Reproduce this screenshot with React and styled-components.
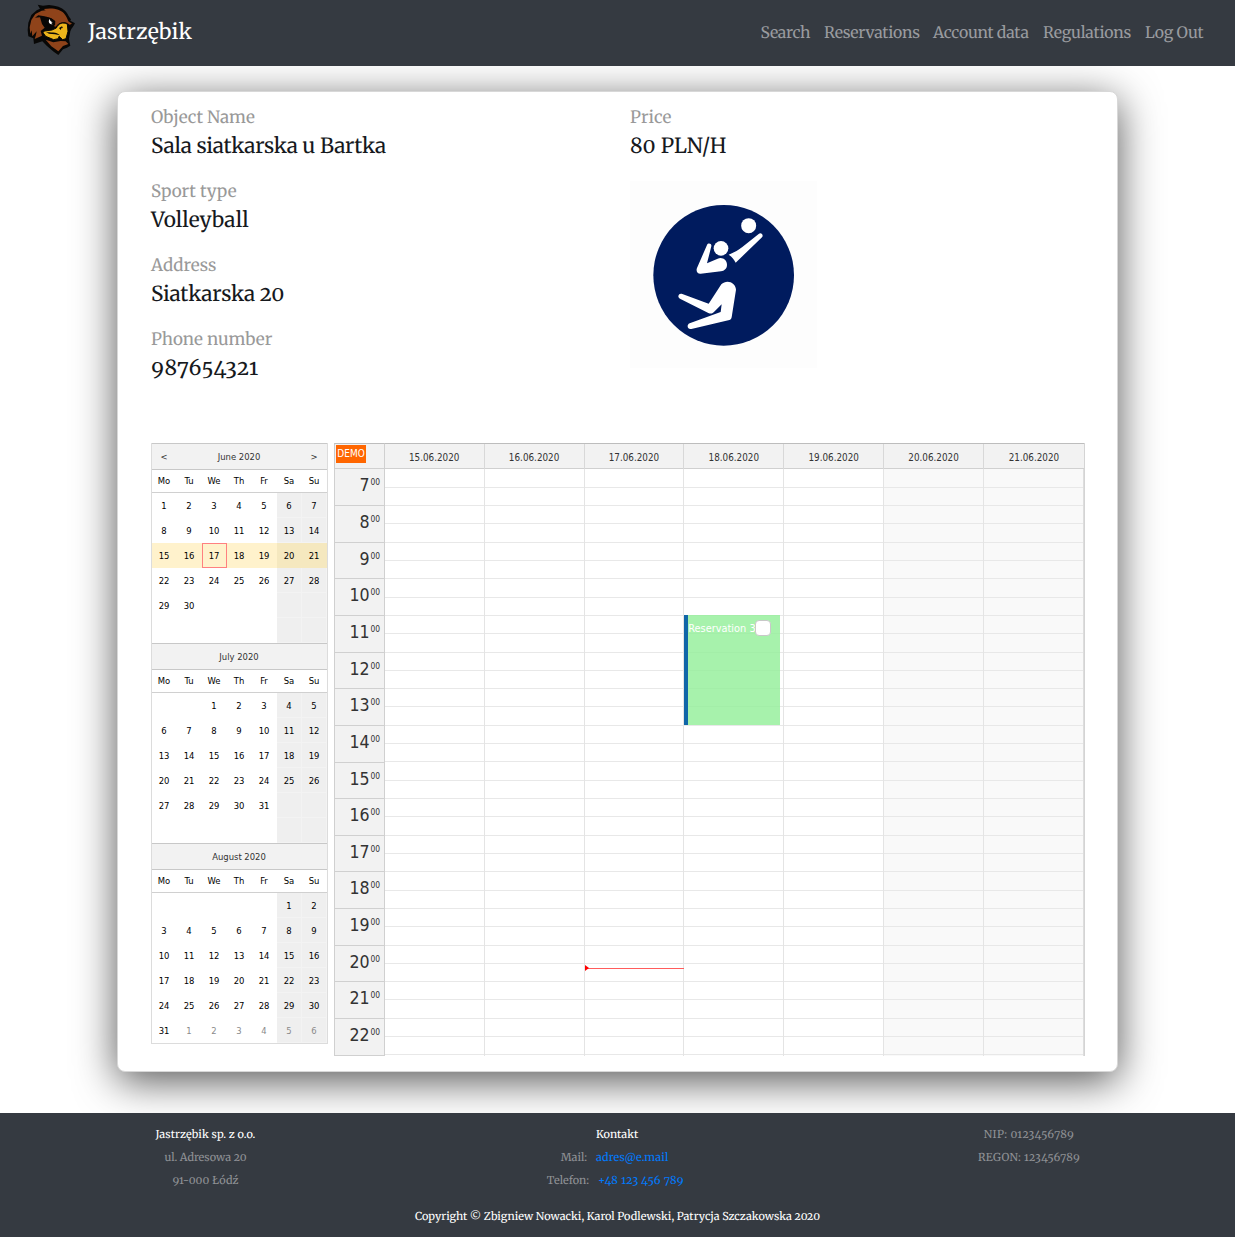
import React from "react";
import styled, { createGlobalStyle } from "styled-components";

const serif = `"Merriweather", "DejaVu Serif Condensed", "DejaVu Serif", serif`;
const sans = `"DejaVu Sans Condensed", "DejaVu Sans", sans-serif`;

const GlobalStyle = createGlobalStyle`
  *, *::before, *::after { box-sizing: border-box; }
  body {
    margin: 0;
    background: #fff;
    color: #16191d;
    font-family: ${serif};
    font-variant-numeric: oldstyle-nums;
    font-variation-settings: "opsz" 18;
    text-rendering: geometricPrecision;
  }
`;

const Page = styled.div`
  display: flex;
  flex-direction: column;
  height: 1237px;
  overflow: hidden;
`;

const Navbar = styled.header`
  position: relative;
  z-index: 1;
  flex: none;
  display: flex;
  align-items: center;
  justify-content: space-between;
  height: 66px;
  padding: 0 32px 0 27px;
  background: #353a41;
`;

const Brand = styled.div`
  display: flex;
  align-items: center;
  gap: 12px;
  height: 60px;
  align-self: flex-start;
  color: #fff;
  font-size: 21.2px;
`;

const BrandName = styled.span`
  padding-top: 2px;
  letter-spacing: 0.2px;
`;

const Nav = styled.nav`
  display: flex;
  gap: 13.5px;
`;

const NavLink = styled.a`
  width: ${(p) => p.$w}px;
  white-space: nowrap;
  font-size: 15.8px;
  line-height: 24px;
  letter-spacing: -0.25px;
  color: #999b9f;
`;

const Main = styled.main`
  flex: none;
  height: 1047px;
  padding: 25px 117px 0;
`;

const Card = styled.section`
  height: 981px;
  padding: 13px 32px 0 33px;
  border: 1px solid #d8d8d8;
  border-radius: 8px;
  background: #fff;
  box-shadow: 0 9px 42px rgba(0, 0, 0, 0.67);
`;

const Details = styled.div`
  display: grid;
  grid-template-columns: 479px 1fr;
  height: 338px;
`;

const Field = styled.div`
  height: 74px;
`;

const Label = styled.div`
  font-size: 17px;
  line-height: 25px;
  color: #999;
`;

const Value = styled.div`
  font-size: 20.8px;
  line-height: 32px;
  white-space: nowrap;
  letter-spacing: ${(p) => p.$tracking || 0}px;
`;

const SportPicture = styled.div`
  width: 187px;
  height: 187px;
  margin-top: 2px;
  background: #fdfdfd;
  svg { display: block; }
`;

const Planner = styled.div`
  display: flex;
  align-items: flex-start;
  gap: 6.5px;
  margin-left: -0.5px;
  font-family: ${sans};
  font-variant-numeric: normal;
  text-rendering: auto;
`;

const Navigator = styled.div`
  width: 177px;
  border: solid #dcdcdc;
  border-width: 0 1px 1px;
  font-size: 9.4px;
  color: #000;
`;

const MonthTitle = styled.div`
  display: grid;
  grid-template-columns: 25px 1fr 25px;
  height: 27px;
  border: solid #c8c8c8;
  border-width: 1px 0;
  background: #f2f2f2;
  color: #333;
  line-height: 26px;
  text-align: center;
`;

const Weekdays = styled.div`
  display: grid;
  grid-template-columns: repeat(7, 25px);
  height: 23px;
  border-bottom: 1px solid #d0d0d0;
  line-height: 22px;
  text-align: center;
`;

const Days = styled.div`
  display: grid;
  grid-template-columns: repeat(7, 25px);
  grid-auto-rows: 25px;
`;

const Day = styled.span`
  line-height: ${(p) => (p.$today ? 23 : 25)}px;
  text-align: center;
  color: ${(p) => (p.$muted ? "#8a8a8a" : "#000")};
  background: ${(p) => (p.$week ? (p.$weekend ? "#f5e8bf" : "#fff2cc") : p.$weekend ? "#efefef" : "#fff")};
  border: ${(p) => (p.$today ? "1px solid #ff8080" : "0 solid")};
  box-shadow: ${(p) => (p.$weekend && !p.$week ? "inset -1px -1px 0 #f3f3f3" : "none")};
`;

const Scheduler = styled.div`
  position: relative;
  display: grid;
  grid-template-columns: 50.8px 1fr;
  grid-template-rows: 26.4px 586.2px;
  width: 750.9px;
  border-right: 1px solid #d4d4d4;
`;

const Demo = styled.span`
  position: absolute;
  left: 2px;
  top: 2px;
  width: 30px;
  height: 17.5px;
  background: #ff6600;
  color: #fff;
  font-size: 10px;
  line-height: 18px;
  text-align: center;
`;

const Corner = styled.div`
  background: #f2f2f2;
  border: 1px solid #ccc;
  border-color: #bdbdbd #d0d0d0 #d0d0d0 #ccc;
`;

const Dates = styled.div`
  display: grid;
  grid-template-columns: repeat(7, 1fr);
  border: solid #bdbdbd;
  border-width: 1px 0;
  border-bottom-color: #d0d0d0;
  background: #f2f2f2;
`;

const DateCell = styled.div`
  border-right: 1px solid #d8d8d8;
  color: #333;
  font-size: 9.8px;
  line-height: 27px;
  text-align: center;
  &:last-child { border-right: 0; }
`;

const Hours = styled.div`
  display: flex;
  flex-direction: column;
`;

const Hour = styled.div`
  flex: 1;
  display: flex;
  justify-content: flex-end;
  gap: 0.8px;
  padding: 5px 3.8px 0 0;
  border: solid #d0d0d0;
  border-width: 0 1px 1px;
  background: #f2f2f2;
  color: #333;
  font-size: 17.6px;
  line-height: 23px;
`;

const Minutes = styled.span`
  font-size: 8.4px;
  line-height: 17px;
`;

const Columns = styled.div`
  display: grid;
  grid-template-columns: repeat(7, 1fr);
`;

const DayColumn = styled.div`
  position: relative;
  display: flex;
  flex-direction: column;
  border-right: 1px solid #e4e4e4;
  background: ${(p) => (p.$weekend ? "#f9f9f9" : "#fff")};
  &:last-child { border-right-color: #ddd; }
`;

const Slot = styled.div`
  flex: 1;
  border-bottom: 1px solid #e8e8e8;
`;

const Booking = styled.div`
  position: absolute;
  left: -0.2px;
  top: 145.7px;
  width: 96px;
  height: 110px;
  display: flex;
  align-items: flex-start;
  padding-top: 5px;
  border-left: 4px solid #1066a8;
  background: rgba(148, 239, 154, 0.82);
  color: #fff;
  font-size: 10.9px;
  line-height: 17px;
  white-space: nowrap;
`;

const BookingName = styled.span`
  width: 67px;
`;

const Check = styled.span`
  width: 16px;
  height: 16px;
  border: 1px solid #c8c8c8;
  border-radius: 4px;
  background: #fff;
`;

const NowLine = styled.div`
  position: absolute;
  left: 0;
  top: 498.7px;
  width: 99.4px;
  height: 1px;
  background: #ff5c5c;
  &::before {
    content: "";
    position: absolute;
    left: 0;
    top: -3px;
    border: solid transparent;
    border-width: 3.5px 0 3.5px 4px;
    border-left-color: #f00;
  }
`;

const Footer = styled.footer`
  position: relative;
  z-index: 1;
  flex: 1;
  background: #353a41;
  color: #8f9195;
  font-size: 10.9px;
  line-height: 23px;
`;

const FooterColumns = styled.div`
  display: grid;
  grid-template-columns: 411px 412px 412px;
  height: 79px;
  padding-top: 10px;
`;

const FooterColumn = styled.div`
  text-align: center;
`;

const Contact = styled.div`
  display: grid;
  grid-template-columns: ${(p) => p.$labelWidth || 176}px 1fr;
  column-gap: 9px;
  text-align: left;
`;

const ContactLabel = styled.span`
  text-align: right;
`;

const Line = styled.div`
  color: ${(p) => (p.$strong ? "#fff" : "inherit")};
  letter-spacing: ${(p) => p.$tracking || 0}px;
`;

const Link = styled.a`
  color: #007bff;
  letter-spacing: ${(p) => p.$tracking || 0}px;
`;

const Copyright = styled.div`
  padding-top: 13px;
  text-align: center;
  color: #fff;
`;

const HawkLogo = () => (
  <svg width="49" height="52" viewBox="80 12 147 156" aria-hidden="true">
    <path d="M112 14 L128 17 L146 15 C168 17 184 22 194 32 C204 43 206 52 212 57 L210 62 L224 70 C221 78 214 83 210 94 L206 116 L207 124 L210 137 L200 143 L188 148 L174 165 L160 155 L139 137 L126 124 L101 132 L99 115 L84 109 L82 91 L84 68 L93 45 L109 31 L119 26 Z" fill="#080706" />
    <path d="M130 27 C157 22 180 28 190 39 C199 49 202 58 204 64 L215 71 L208 74 L199 68 C186 65 174 68 166 80 L160 78 L163 62 C154 55 144 50 128 48 L114 46 L104 53 L119 52 L125 72 L133 83 L121 93 L125 107 L103 117 L106 108 L109 94 L96 109 L94 91 L90 101 L88 82 L93 60 L105 42 L124 32 L136 31 Z" fill="#8f431a" />
    <path d="M136 119 L159 127 L181 123 L196 124 L204 132 L188 138 L174 154 L153 139 Z" fill="#8f431a" />
    <path d="M201 72 C188 66 175 69 168 84 L155 90 L132 93 L128 98 L136 109 L160 119 L174 116 L176 109 L187 119 L197 116 L203 94 Z" fill="#edb51b" stroke="#080706" strokeWidth="3" />
    <path d="M136 95 C149 99 169 94 179 106 L164 103 L146 101 Z" fill="#080706" />
    <path d="M176 84 L185 79 L188 85 L184 83 L181 90 Z" fill="#080706" />
    <path d="M130 50 L152 54 L165 64 L164 76 L154 80 L142 76 L134 66 Z" fill="#080706" />
    <path d="M148 57 C142 66 147 73 157 73 C151 69 153 67 158 67 C150 65 150 62 148 57Z" fill="#fff" />
  </svg>
);

const VolleyballSign = () => (
  <svg width="187" height="187" viewBox="31 272 561 561" aria-hidden="true">
    <circle cx="312" cy="555" r="211" fill="#001b5e" />
    <g fill="#fff">
      <circle cx="387" cy="406" r="22.5" />
      <circle cx="304" cy="474" r="22" />
      <path d="M417 431 C424 425 433 434 427 441 L348 517 C343 507 338 500 327 493 C346 486 357 478 368 470 Z" />
      <path d="M262 464 C265 456 277 459 275 468 L262 519 L294 505 C308 499 322 509 322 523 C322 535 314 541 304 543 L243 550 C234 551 228 542 232 533 Z" />
      <path d="M305 582 C320 566 348 575 349 598 L336 681 C335 687 331 689 326 690 L215 716 C203 719 200 703 210 699 L303 665 L306 642 L282 666 C277 671 272 670 266 668 L181 625 C171 619 178 606 188 611 L267 640 Z" />
    </g>
  </svg>
);

const range = (from, to) => Array.from({ length: to - from + 1 }, (_, i) => from + i);
const blanks = (n) => Array(n).fill("");

const months = [
  { name: "June 2020", pager: true, week: 2, today: 17, days: [...range(1, 30), ...blanks(12)] },
  { name: "July 2020", days: [...blanks(2), ...range(1, 31), ...blanks(9)] },
  { name: "August 2020", overflowAt: 36, days: [...blanks(5), ...range(1, 31), ...range(1, 6)] },
];
const weekdays = ["Mo", "Tu", "We", "Th", "Fr", "Sa", "Su"];
const fields = [
  ["Object Name", "Sala siatkarska u Bartka", -0.22],
  ["Sport type", "Volleyball", 0.05],
  ["Address", "Siatkarska 20", -0.15],
  ["Phone number", "987654321", 0.6],
];
const links = [
  ["Search", 50],
  ["Reservations", 95.5],
  ["Account data", 96.5],
  ["Regulations", 88.5],
  ["Log Out", 58],
];

const Month = ({ name, pager, week, today, overflowAt, days }) => (
  <div>
    <MonthTitle>
      <span>{pager && "<"}</span>
      <span>{name}</span>
      <span>{pager && ">"}</span>
    </MonthTitle>
    <Weekdays>{weekdays.map((d) => <span key={d}>{d}</span>)}</Weekdays>
    <Days>
      {days.map((d, i) => (
        <Day
          key={i}
          $weekend={i % 7 > 4}
          $week={week !== undefined && Math.floor(i / 7) === week}
          $today={today !== undefined && d === today}
          $muted={overflowAt !== undefined && i >= overflowAt}
        >
          {d}
        </Day>
      ))}
    </Days>
  </div>
);

export default function App() {
  return (
    <Page>
      <GlobalStyle />
      <Navbar>
        <Brand>
          <HawkLogo />
          <BrandName>Jastrzębik</BrandName>
        </Brand>
        <Nav>
          {links.map(([text, w]) => <NavLink key={text} $w={w}>{text}</NavLink>)}
        </Nav>
      </Navbar>
      <Main>
        <Card>
          <Details>
            <div>
              {fields.map(([label, value, tracking]) => (
                <Field key={label}>
                  <Label>{label}</Label>
                  <Value $tracking={tracking}>{value}</Value>
                </Field>
              ))}
            </div>
            <div>
              <Field>
                <Label>Price</Label>
                <Value $tracking={0.1}>80 PLN/H</Value>
              </Field>
              <SportPicture><VolleyballSign /></SportPicture>
            </div>
          </Details>
          <Planner>
            <Navigator>{months.map((m) => <Month key={m.name} {...m} />)}</Navigator>
            <Scheduler>
              <Corner />
              <Dates>
                {range(15, 21).map((d) => <DateCell key={d}>{d}.06.2020</DateCell>)}
              </Dates>
              <Hours>
                {range(7, 22).map((h) => <Hour key={h}>{h}<Minutes>00</Minutes></Hour>)}
              </Hours>
              <Columns>
                {range(0, 6).map((c) => (
                  <DayColumn key={c} $weekend={c > 4}>
                    {range(0, 31).map((s) => <Slot key={s} />)}
                    {c === 3 && (
                      <Booking>
                        <BookingName>Reservation 3</BookingName>
                        <Check />
                      </Booking>
                    )}
                    {c === 2 && <NowLine />}
                  </DayColumn>
                ))}
              </Columns>
              <Demo>DEMO</Demo>
            </Scheduler>
          </Planner>
        </Card>
      </Main>
      <Footer>
        <FooterColumns>
          <FooterColumn>
            <Line $strong $tracking={0.08}>Jastrzębik sp. z o.o.</Line>
            <Line>ul. Adresowa 20</Line>
            <Line $tracking={0.1}>91-000 Łódź</Line>
          </FooterColumn>
          <FooterColumn>
            <Contact><span /><Line $strong>Kontakt</Line></Contact>
            <Contact><ContactLabel>Mail:</ContactLabel><Link $tracking={0.15}>adres@e.mail</Link></Contact>
            <Contact $labelWidth={178}><ContactLabel>Telefon:</ContactLabel><Link $tracking={0.35}>+48 123 456 789</Link></Contact>
          </FooterColumn>
          <FooterColumn>
            <Line $tracking={0.4}>NIP: 0123456789</Line>
            <Line $tracking={0.3}>REGON: 123456789</Line>
          </FooterColumn>
        </FooterColumns>
        <Copyright>Copyright © Zbigniew Nowacki, Karol Podlewski, Patrycja Szczakowska 2020</Copyright>
      </Footer>
    </Page>
  );
}
